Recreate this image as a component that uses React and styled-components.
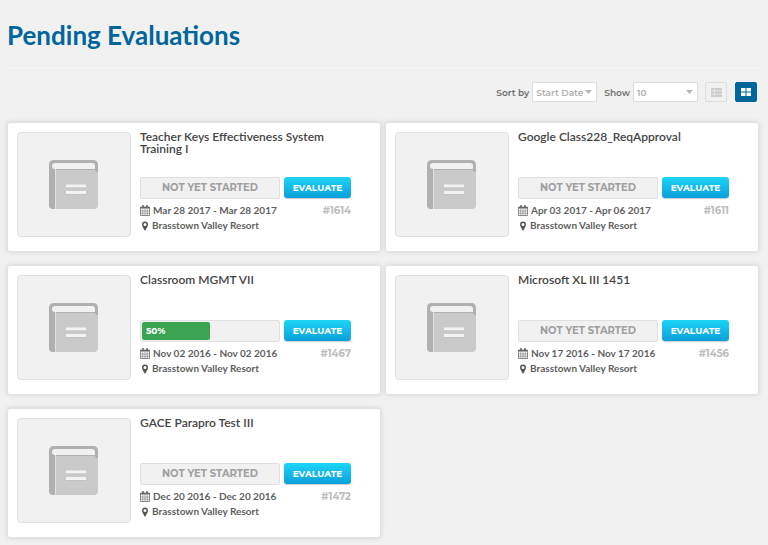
import React, { useState } from "react";
import styled, { createGlobalStyle } from "styled-components";

const GlobalStyle = createGlobalStyle`
  * {
    box-sizing: border-box;
  }

  body {
    margin: 0;
    background-color: #F1F1F1;
    font-family: "Lato", sans-serif;
  }
`;

const accentFont = "Montserrat, \"Inter\", sans-serif";

const Page = styled.main`
  padding: 18px 9px 7px 7px;
`;

const Heading = styled.h1`
  margin: 0;
  padding-bottom: 14px;
  border-bottom: 1px solid #ECECEC;
  box-shadow: 0 1px 0 #F8F8F8;
  color: #00669B;
  font-size: 26px;
  font-weight: 700;
  line-height: 34px;
`;

const Toolbar = styled.div`
  display: flex;
  justify-content: flex-end;
  align-items: center;
  padding: 15px 2px 20px 0;
`;

const ControlLabel = styled.label`
  margin-right: 3px;
  color: #707070;
  font-family: ${accentFont};
  font-size: 9px;
  font-weight: 600;
`;

const SelectBox = styled.div`
  position: relative;
  width: 65px;
  margin-right: 7px;

  svg {
    position: absolute;
    top: 8px;
    right: 5px;
    pointer-events: none;
  }
`;

const Select = styled.select`
  display: block;
  width: 100%;
  height: 20px;
  padding: 0 0 0 3px;
  appearance: none;
  border: 1px solid #DDDDDD;
  border-radius: 2px;
  background-color: #FFFFFF;
  color: #B0B0B0;
  font-family: ${accentFont};
  font-size: 9px;
  font-weight: 600;
`;

const ViewButtons = styled.div`
  display: flex;
  gap: 8px;
`;

const ViewButton = styled.button`
  display: flex;
  align-items: center;
  justify-content: center;
  width: 22px;
  height: 20px;
  padding: 0;
  border: 1px solid ${({ $active }) => $active ? "#00669B" : "#DDDDDD"};
  border-radius: 2px;
  background-color: ${({ $active }) => $active ? "#00669B" : "#F1F1F1"};
  color: ${({ $active }) => $active ? "#FFFFFF" : "#CCCCCC"};
`;

const CardGrid = styled.div`
  display: grid;
  grid-template-columns: ${({ $view }) => $view === "grid" ? "1fr 1fr" : "1fr"};
  gap: 13px 4px;
`;

const Card = styled.article`
  display: flex;
  gap: 9px;
  padding: 8px 29px 14px 9px;
  border: 1px solid #E2E2E2;
  border-radius: 3px;
  background-color: #FFFFFF;
  box-shadow: 0 0 5px rgba(0, 0, 0, 0.12);
`;

const Thumbnail = styled.div`
  display: flex;
  flex: none;
  align-items: center;
  justify-content: center;
  width: 114px;
  height: 105px;
  margin-top: 1px;
  border: 1px solid #E0E0E0;
  border-radius: 4px;
  background-color: #F1F1F1;
`;

const Details = styled.div`
  display: flex;
  flex: 1;
  flex-direction: column;
  min-width: 0;
`;

const Title = styled.h2`
  min-height: 46px;
  margin: 0;
  color: #444444;
  font-size: 12px;
  font-weight: 600;
  line-height: 12px;
`;

const StatusRow = styled.div`
  display: flex;
  gap: 4px;
  margin-bottom: 4px;
`;

const Status = styled.div`
  flex: 1;
  height: 22px;
  padding: 1px;
  border: 1px solid #E0E0E0;
  border-radius: 2px;
  background-color: #F1F1F1;
  color: #A0A0A0;
  font-family: ${accentFont};
  font-size: 10px;
  font-weight: 700;
  line-height: 18px;
  text-align: center;
`;

const Progress = styled.div`
  height: 18px;
  padding-left: 4px;
  border-radius: 2px;
  background-color: #3BA453;
  color: #FFFFFF;
  font-size: 9px;
  text-align: left;
`;

const EvaluateButton = styled.button`
  width: 67px;
  height: 21px;
  padding: 0;
  border: 0;
  border-radius: 3px;
  background: linear-gradient(#1DD5F6, #0B9FDB);
  box-shadow: 0 1px 1px rgba(0, 0, 0, 0.2);
  color: #FFFFFF;
  font-family: ${accentFont};
  font-size: 9px;
  font-weight: 700;
`;

const InfoRow = styled.div`
  display: flex;
  align-items: center;
  gap: 3px;
  color: #5F5F5F;
  font-size: 10px;
  font-weight: 700;
  line-height: 15px;
`;

const PlaceRow = styled(InfoRow)`
  padding-left: 1px;
`;

const Number = styled.span`
  margin-left: auto;
  color: #BDBDBD;
  font-family: ${accentFont};
`;

const BookIcon = () => (
  <svg width="50" height="50" viewBox="0 0 50 50" aria-hidden="true">
    <path d="M5 0H44Q49 0 49 5V13H5V49Q0 49 0 44V5Q0 0 5 0Z" fill="#B0B0B0" />
    <path d="M0 7H6V49H4Q0 49 0 45Z" fill="#B0B0B0" />
    <path d="M7 10H46Q46 12 49 12V45Q49 49 45 49H7Z" fill="#CACACA" />
    <path d="M6 9H46V6Q46 3 43 3H6Q3 3 3 6Q3 9 6 9Z" fill="#F1F1F1" />
    <path d="M6.5 9V49" stroke="#E2E2E2" />
    <path d="M17 26H37M17 32.5H37" stroke="#F3F3F3" strokeWidth="3" />
    <path d="M17 28H37M17 34.5H37" stroke="#BDBDBD" strokeWidth="0.7" />
  </svg>
);

const CalendarIcon = () => (
  <svg width="10" height="11" viewBox="0 0 20 22" aria-hidden="true">
    <path d="M1 4H19V21H1Z" fill="#FFFFFF" stroke="#666666" strokeWidth="1.5" />
    <path d="M1 4H19V7H1Z" fill="#666666" />
    <path d="M5.5 7V21M10 7V21M14.5 7V21M1 12H19M1 16.5H19" stroke="#777777" strokeWidth="1.2" />
    <path d="M6 0V5M14 0V5" stroke="#666666" strokeWidth="3" />
  </svg>
);

const PinIcon = () => (
  <svg width="8" height="10" viewBox="0 0 16 20" aria-hidden="true">
    <path
      d="M8 1A6 6 0 0 0 2 7Q2 9 3 11L7 18.5Q8 20 9 18.5L13 11Q14 9 14 7A6 6 0 0 0 8 1ZM8 4A3 3 0 0 1 8 10A3 3 0 0 1 8 4Z"
      fill="#555555"
      fillRule="evenodd"
    />
  </svg>
);

const CaretIcon = () => (
  <svg width="7" height="4" viewBox="0 0 7 4" aria-hidden="true">
    <path d="M0 0H7L3.5 4Z" fill="#B5B5B5" />
  </svg>
);

const ListIcon = () => (
  <svg width="11" height="9" viewBox="0 0 11 9" aria-hidden="true">
    <path d="M0 0H3V2.5H0ZM3.5 0H11V2.5H3.5ZM0 3.2H3V5.8H0ZM3.5 3.2H11V5.8H3.5ZM0 6.5H3V9H0ZM3.5 6.5H11V9H3.5Z" fill="currentColor" />
  </svg>
);

const GridIcon = () => (
  <svg width="10" height="8" viewBox="0 0 20 16" aria-hidden="true">
    <path d="M0 0H9V7H0ZM11 0H20V7H11ZM0 9H9V16H0ZM11 9H20V16H11Z" fill="currentColor" />
  </svg>
);

const evaluations = [
  { id: 1614, title: "Teacher Keys Effectiveness System Training I", dates: "Mar 28 2017 - Mar 28 2017" },
  { id: 1611, title: "Google Class228_ReqApproval", dates: "Apr 03 2017 - Apr 06 2017" },
  { id: 1467, title: "Classroom MGMT VII", dates: "Nov 02 2016 - Nov 02 2016", progress: 50 },
  { id: 1456, title: "Microsoft XL III 1451", dates: "Nov 17 2016 - Nov 17 2016" },
  { id: 1472, title: "GACE Parapro Test III", dates: "Dec 20 2016 - Dec 20 2016" }
];

const EvaluationCard = ({ id, title, dates, progress }) => (
  <Card>
    <Thumbnail>
      <BookIcon />
    </Thumbnail>
    <Details>
      <Title>{title}</Title>
      <StatusRow>
        <Status>
          {progress ? <Progress style={{ width: `${progress}%` }}>{progress}%</Progress> : "NOT YET STARTED"}
        </Status>
        <EvaluateButton type="button">EVALUATE</EvaluateButton>
      </StatusRow>
      <InfoRow>
        <CalendarIcon />
        {dates}
        <Number>#{id}</Number>
      </InfoRow>
      <PlaceRow>
        <PinIcon />
        Brasstown Valley Resort
      </PlaceRow>
    </Details>
  </Card>
);

const App = () => {
  const [view, setView] = useState("grid");

  return (<>
    <GlobalStyle />
    <Page>
      <Heading>Pending Evaluations</Heading>
      <Toolbar>
        <ControlLabel htmlFor="sort">Sort by</ControlLabel>
        <SelectBox>
          <Select id="sort">
            <option>Start Date</option>
          </Select>
          <CaretIcon />
        </SelectBox>
        <ControlLabel htmlFor="show">Show</ControlLabel>
        <SelectBox>
          <Select id="show">
            <option>10</option>
          </Select>
          <CaretIcon />
        </SelectBox>
        <ViewButtons>
          <ViewButton type="button" aria-label="List view" $active={view === "list"} onClick={() => setView("list")}>
            <ListIcon />
          </ViewButton>
          <ViewButton type="button" aria-label="Grid view" $active={view === "grid"} onClick={() => setView("grid")}>
            <GridIcon />
          </ViewButton>
        </ViewButtons>
      </Toolbar>
      <CardGrid $view={view}>
        {evaluations.map((evaluation) => (
          <EvaluationCard key={evaluation.id} {...evaluation} />
        ))}
      </CardGrid>
    </Page>
  </>);
};

export default App;
